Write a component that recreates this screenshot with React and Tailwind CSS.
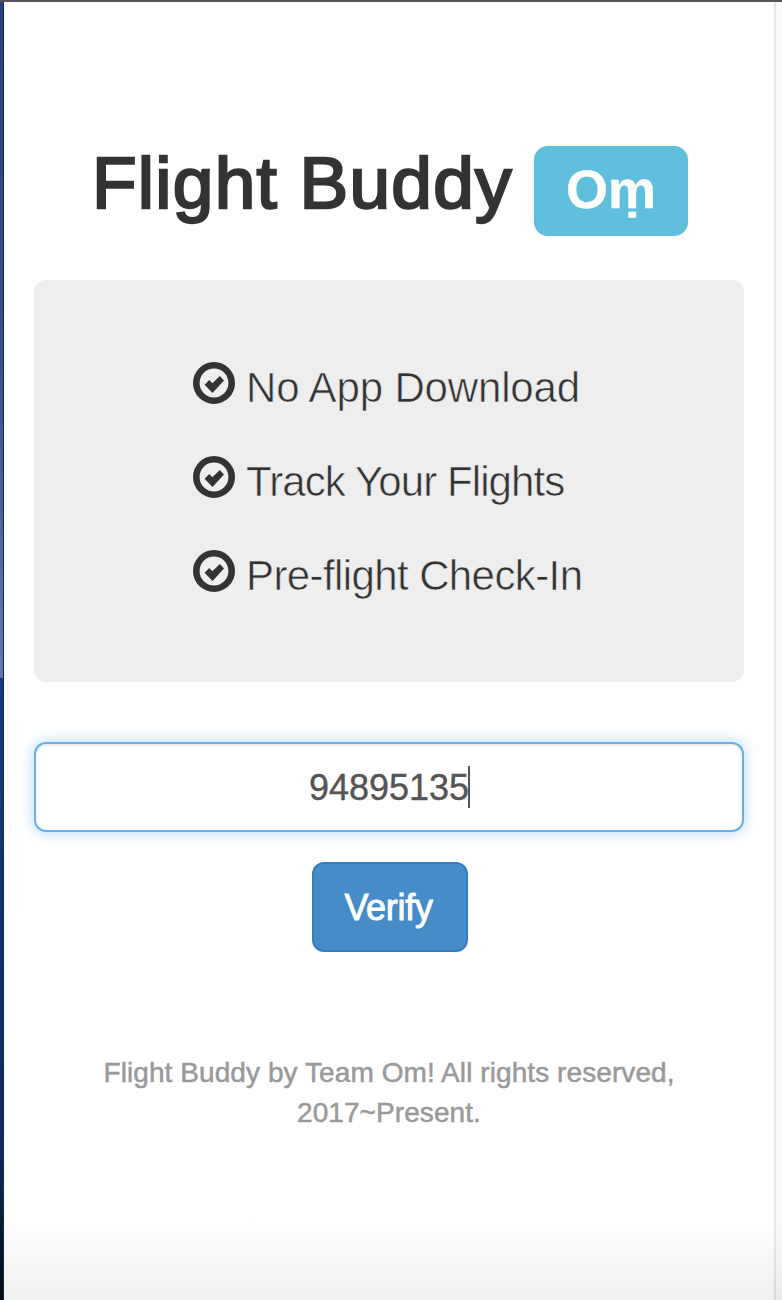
const features = [
  { label: 'No App Download', tracking: 'tracking-[-0.15px]' },
  { label: 'Track Your Flights', tracking: 'tracking-[-0.9px]' },
  { label: 'Pre-flight Check-In', tracking: 'tracking-[-0.6px]' },
];

function CheckIcon() {
  return (
    <svg className="h-[42px] w-[42px] shrink-0" viewBox="0 0 42 42" fill="none">
      <circle cx="21" cy="21" r="17.7" stroke="#333" strokeWidth="6.6" />
      <path d="M11.6 22.8 16.2 18.1 19.4 21.3 26.8 14 31 18.5 19.5 31Z" fill="#333" />
    </svg>
  );
}

export default function App() {
  return (
    <div className="relative flex h-[1300px] w-[782px] flex-col overflow-hidden bg-white font-['Liberation_Sans',Arial,sans-serif] text-[#333]">
      <div className="h-[2px] shrink-0 bg-[#555355]" />
      <div className="flex min-h-0 flex-1">
        <div className="flex w-1 shrink-0 flex-col border-r border-[#14264e]">
          <div className="h-[676px] bg-linear-to-b from-[#26427e] via-[#34508c] to-[#6079ad]" />
          <div className="flex-1 bg-linear-to-b from-[#123a78] via-[#0d2c62] via-75% to-[#040c0e]" />
        </div>
        <main className="flex w-[770px] flex-col items-center px-[30px] pt-36">
          <h1 className="ml-[2px] flex h-[90px] items-start gap-[20px] whitespace-nowrap">
            <span className="w-[422px] text-[73px] leading-[73px] tracking-[1.25px] [-webkit-text-stroke:2.4px_#333]">
              Flight Buddy
            </span>
            <span className="flex h-[90px] w-[154px] items-center justify-center rounded-[14px] bg-[#5fbfdc] pb-[4px] text-[54px] leading-none font-bold text-white [-webkit-text-stroke:0.4px_white]">
              Oṃ
            </span>
          </h1>
          <section className="mt-11 flex h-[402px] w-[710px] shrink-0 flex-col gap-[52px] rounded-xl bg-[#eee] pt-[82px] pl-[159px]">
            {features.map((f) => (
              <div key={f.label} className="flex h-[42px] gap-[11px]">
                <CheckIcon />
                <span className={`pt-[5px] text-[42px] leading-[42px] whitespace-nowrap [-webkit-text-stroke:0.6px_#eee] ${f.tracking}`}>
                  {f.label}
                </span>
              </div>
            ))}
          </section>
          <div className="mt-[60px] flex h-[90px] w-[710px] shrink-0 items-center justify-center rounded-xl border-2 border-[#66afe9] bg-white pt-[2px] text-[36px] leading-none text-[#555] shadow-[inset_0_2px_2px_rgba(0,0,0,0.075),0_0_14px_rgba(102,175,233,0.5)]">
            <span className="relative [-webkit-text-stroke:0.4px_#555]">
              94895135
              <span className="absolute -top-[4px] -right-px h-[42px] w-[2px] bg-[#555]" />
            </span>
          </div>
          <button className="mt-[30px] ml-[2px] h-[90px] w-[156px] shrink-0 rounded-xl border-2 border-[#357ebd] bg-[#468cc8] pt-[2px] pr-[3px] text-[36px] leading-none tracking-[-0.3px] text-white [-webkit-text-stroke:0.9px_white]">
            Verify
          </button>
          <footer className="mt-[101px] text-center text-[28px] leading-10 tracking-[0.08px] whitespace-nowrap text-[#999] [-webkit-text-stroke:0.5px_#999]">
            Flight Buddy by Team Om! All rights reserved,
            <br />
            2017~Present.
          </footer>
        </main>
        <div className="w-[2px] bg-[#e6e6e6]" />
        <div className="flex-1 bg-[#fafafa]" />
      </div>
      <div className="absolute right-0 bottom-0 left-1 h-[84px] bg-linear-to-b from-transparent to-black/6" />
    </div>
  );
}
